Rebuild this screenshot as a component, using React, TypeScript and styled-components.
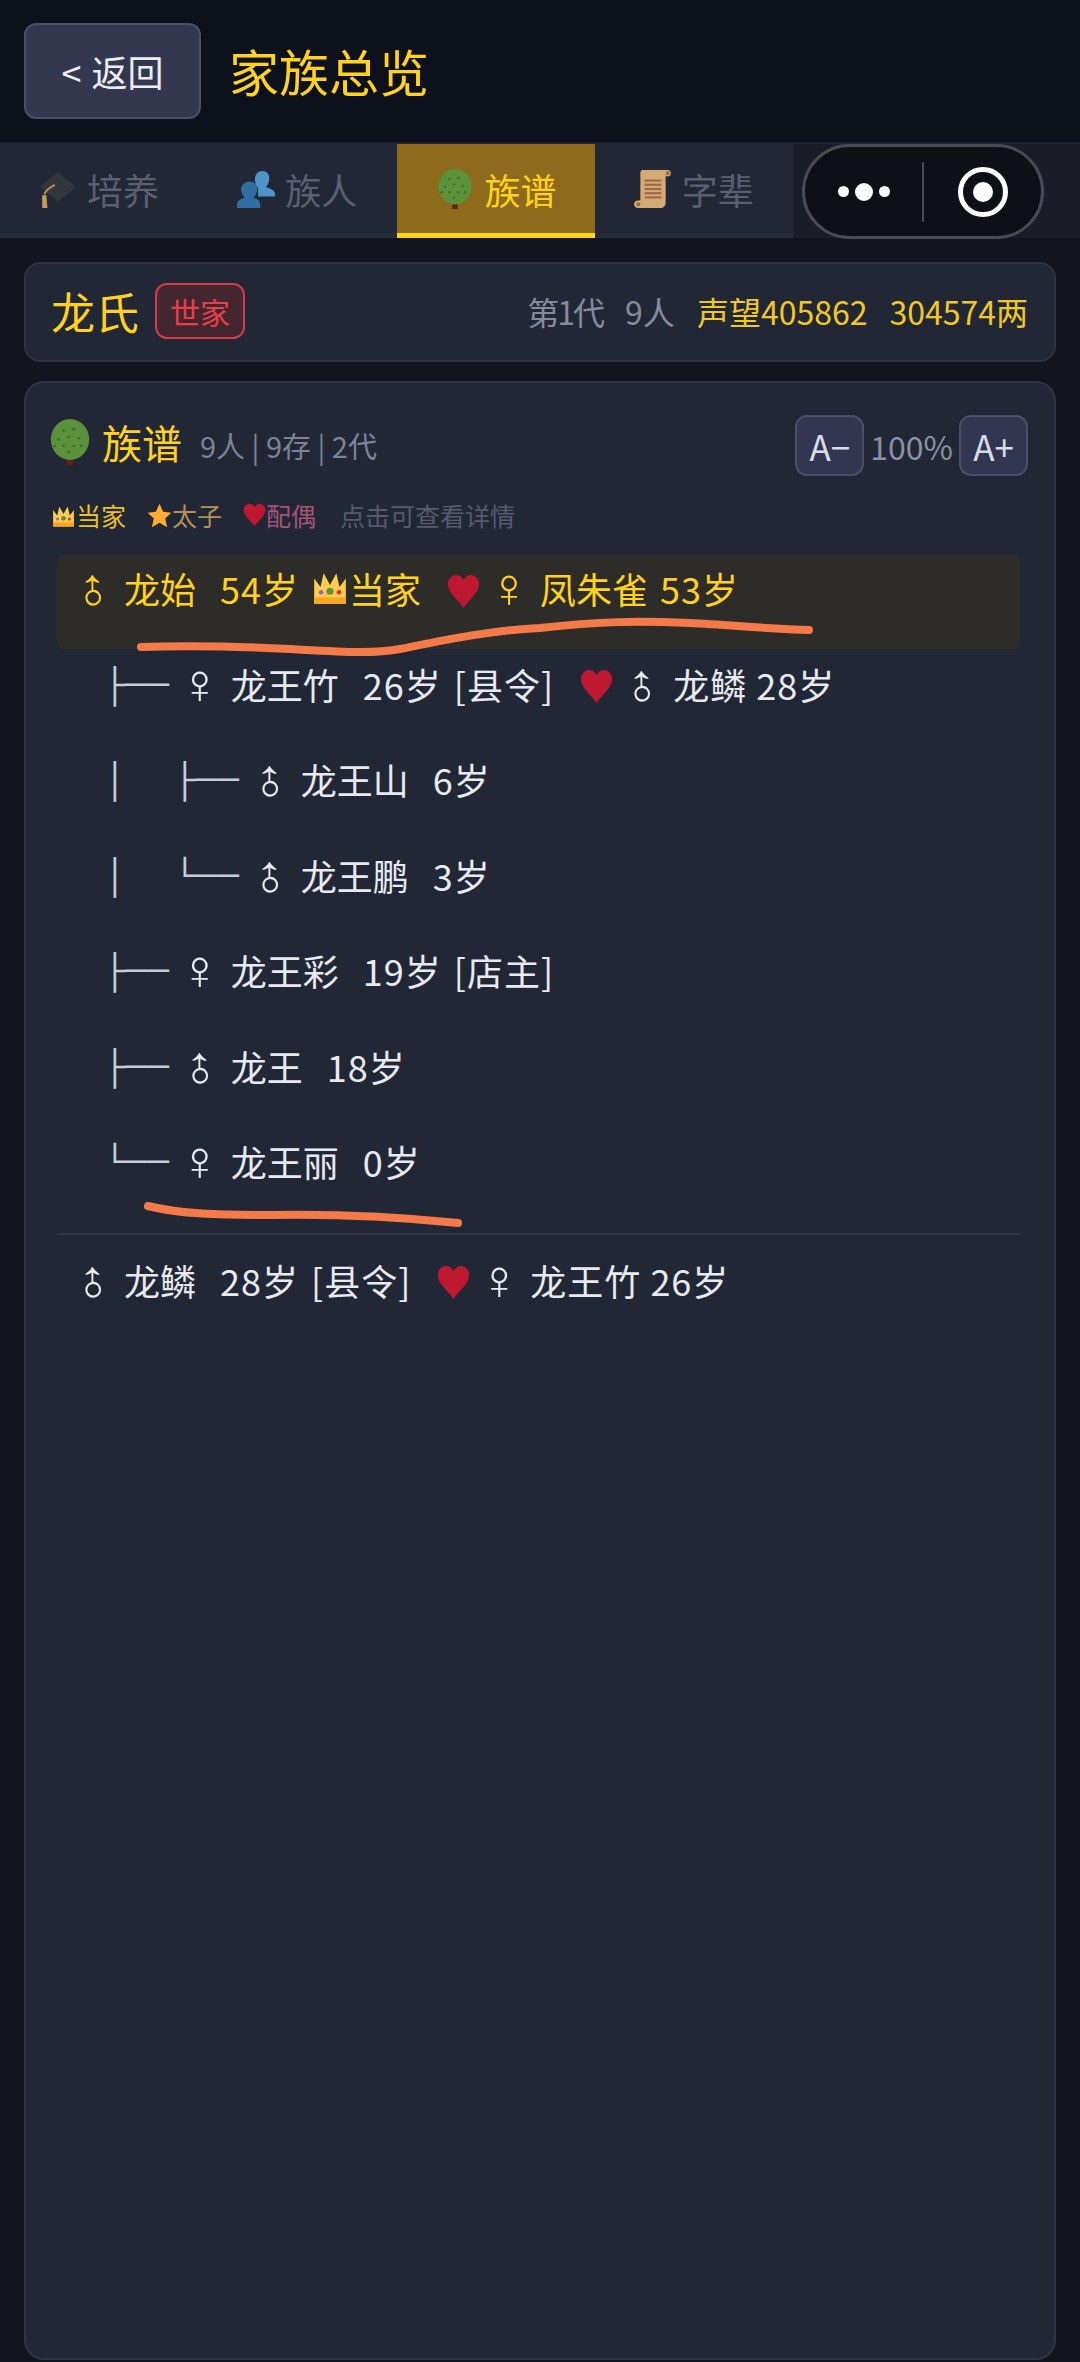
import React from "react";
import styled, { createGlobalStyle } from "styled-components";

const Global = createGlobalStyle`
  html, body { margin: 0; padding: 0; background: #11141c; }
  body { font-family: "Noto Sans CJK SC", "Noto Sans", sans-serif; }
  * { box-sizing: border-box; }
`;
const Page = styled.div`
  position: relative; width: 1080px; height: 2362px; overflow: hidden;
  display: flex; flex-direction: column; background: #11141c;
`;
const Header = styled.header`
  height: 144px; flex: none; background: #0d111c; display: flex; align-items: center;
  padding: 0 24px; gap: 28px; border-bottom: 2px solid #1d2130;
`;
const BackButton = styled.div`
  width: 177px; height: 96px; border-radius: 12px; background: #333850; border: 2px solid #4a5069;
  display: flex; align-items: center; justify-content: center; gap: 10px; color: #eceef4; font-size: 36px;
`;
const Title = styled.h1`
  margin: 0 0 2px; font-size: 50px; font-weight: 400; color: #ffd21e; line-height: 1;
`;
const TabBar = styled.nav`
  height: 94px; flex: none; display: flex; background: #1a1d28;
`;
const Tab = styled.div<{ $active?: boolean }>`
  width: 198.25px; display: flex; align-items: center; justify-content: center; gap: 10px;
  font-size: 36px;
  color: ${(p) => (p.$active ? "#ffd21e" : "#5a5f72")};
  background: ${(p) => (p.$active ? "#8d6a1c" : "#222735")};
  border-bottom: 5px solid ${(p) => (p.$active ? "#ffd21e" : "#262b3a")};
`;
const Capsule = styled.div`
  position: absolute; left: 802px; top: 144px; width: 242px; height: 95px; border-radius: 48px;
  background: #0e1015; border: 3px solid #4a4b52; display: flex; align-items: center;
`;
const CapsuleSide = styled.div`
  flex: 1; display: flex; align-items: center; justify-content: center; gap: 6px;
`;
const Dot = styled.span<{ $big?: boolean }>`
  display: block; border-radius: 50%; background: #fff;
  width: ${(p) => (p.$big ? 18 : 11)}px; height: ${(p) => (p.$big ? 18 : 11)}px;
`;
const CapsuleDivider = styled.span`
  width: 2px; height: 60px; background: #4a4b52;
`;
const Target = styled.span`
  width: 50px; height: 50px; border-radius: 50%; border: 5px solid #fff; display: flex;
  align-items: center; justify-content: center;
  &::after { content: ""; width: 20px; height: 20px; border-radius: 50%; background: #fff; }
`;
const Content = styled.main`
  flex: 1; display: flex; flex-direction: column; gap: 19px; padding: 24px 24px 2px;
`;
const ClanCard = styled.section`
  height: 100px; flex: none; background: #222735; border: 2px solid #2e3346; border-radius: 16px;
  display: flex; align-items: center; padding: 0 26px 3px 25px;
`;
const ClanName = styled.div`
  font-size: 44px; font-weight: 400; color: #ffd21e; line-height: 1;
`;
const RankBadge = styled.div`
  margin-left: 16px; width: 90px; height: 56px; border-radius: 12px; border: 2px solid #d23c48;
  background: #43262f; color: #e8404a; font-size: 30px; display: flex; align-items: center; justify-content: center;
`;
const ClanStats = styled.div`
  margin-left: auto; display: flex; align-items: center; gap: 22px; font-size: 32px;
`;
const Stat = styled.span<{ $gold?: boolean; $tight?: boolean }>`
  color: ${(p) => (p.$gold ? "#f2c823" : "#858b9f")};
  letter-spacing: ${(p) => (p.$tight ? "-2px" : "0")};
`;
const TreeCard = styled.section`
  flex: 1; background: #222735; border: 2px solid #2e3346; border-radius: 20px; padding: 0 26px 0 31px;
  display: flex; flex-direction: column;
`;
const TreeHeader = styled.div`
  display: flex; align-items: center; height: 123px; flex: none; margin-left: -5px;
`;
const TreeTitle = styled.div`
  display: flex; align-items: center; gap: 9px; font-size: 40px; font-weight: 400; color: #ffd21e;
  margin: -5px 0 0 -5px;
`;
const TreeCount = styled.div`
  margin-left: 18px; font-size: 29px; color: #7d8398;
`;
const Zoomer = styled.div`
  margin-left: auto; display: flex; align-items: center; gap: 6px; font-size: 32px; color: #8b90a6;
  margin-top: 2px;
`;
const ZoomButton = styled.div`
  width: 69px; height: 61px; border-radius: 12px; border: 2px solid #4a5069; background: #323650;
  color: #d8dbe8; display: flex; align-items: center; justify-content: center; font-size: 35px;
`;
const Legend = styled.div`
  display: flex; align-items: center; height: 40px; margin: -11px 0 20px -6px; font-size: 25px; flex: none;
`;
const LegendItem = styled.span<{ $color: string; $gap?: number }>`
  display: inline-flex; align-items: center; color: ${(p) => p.$color}; margin-right: ${(p) => p.$gap ?? 21}px;
`;
const Rows = styled.div`
  display: flex; flex-direction: column; margin-right: 8px;
`;
const Row = styled.div<{ $hl?: boolean }>`
  height: 93.5px; margin-bottom: 2px; flex: none; padding: 13px 0 0 24px; border-radius: 6px;
  display: flex; align-items: flex-start; font-size: 36px; line-height: 40px; white-space: pre;
  background: ${(p) => (p.$hl ? "#2e2c28" : "transparent")};
  color: ${(p) => (p.$hl ? "#ffd21e" : "#e8eaf2")};
`;
const Prefix = styled.span`
  flex: none; font-family: "Liberation Mono", monospace; font-size: 36px; line-height: 40px;
  color: #c9cdd8; margin: 3px 19px 0 23px;
`;
const Pipe = styled.span`
  display: inline-block; width: 70px;
`;
const Sex = styled.span`
  flex: none; width: 43px; display: flex; align-items: center; height: 40px; margin-left: -9px; margin-right: 9px;
`;
const SexGlyph = styled.span<{ $male?: boolean }>`
  display: inline-block; font-family: "Liberation Sans", sans-serif; font-size: 56px; line-height: 1;
  transform: ${(p) => (p.$male ? "translateY(4px) rotate(-45deg)" : "none")};
`;
const Name = styled.span<{ $gap?: number }>`
  margin-right: ${(p) => p.$gap ?? 24}px;
`;
const Age = styled.span`
  margin-right: 12px; letter-spacing: 1px;
`;
const Spaced = styled.span`
  letter-spacing: 1px;
`;
const Spouse = styled.span`
  flex: none; width: 76px; height: 40px; margin-top: 3px; padding-left: 26px; display: flex; align-items: center;
`;
const Rule = styled.div`
  height: 2px; flex: none; background: #2f3447; margin: 9px 0 12px;
`;
const Ink = styled.svg`
  position: absolute; left: 0; top: 0; pointer-events: none;
`;
const Icon = styled.svg`
  flex: none; display: block;
`;

const Crown = ({ s = 38 }: { s?: number }) => (
  <Icon width={s} height={s} viewBox="0 0 36 36">
    <path d="M3 34V10l6 8 3-13 6 11 6-11 3 13 6-8v24z" fill="#ffcc4d" />
    <rect x="3" y="28" width="30" height="6" fill="#f5a623" />
    <circle cx="18" cy="22" r="3.400" fill="#5c913b" />
    <circle cx="9.500" cy="23" r="2.200" fill="#9266cc" />
    <circle cx="26.500" cy="23" r="2.200" fill="#dd2e44" />
  </Icon>
);
const Heart = ({ s = 35, w = 33 }: { s?: number; w?: number }) => (
  <Icon width={w} height={s} viewBox="0 0 36 36" preserveAspectRatio="none">
    <path d="M18 35C14 28 1 20 1 10.500C1 4.500 5.500 1 10 1c3.800 0 6.700 2.200 8 5.500C19.300 3.200 22.200 1 26 1c4.500 0 9 3.500 9 9.500C35 20 22 28 18 35z" fill="#be1931" />
  </Icon>
);
const Star = () => (
  <Icon width={25} height={25} viewBox="0 0 36 36">
    <path d="M18 1l5.200 11.600L35 14l-8.800 8.200L29 35 18 28.500 7 35l2.800-12.800L1 14l11.800-1.400z" fill="#ffac33" />
  </Icon>
);
const TreeIcon = ({ s = 46 }: { s?: number }) => (
  <Icon width={s} height={s} viewBox="0 0 36 36">
    <rect x="15.500" y="27" width="5" height="9" fill="#662113" />
    <ellipse cx="18" cy="16" rx="15" ry="16" fill="#5c913b" />
    {[[13, 9], [21, 8], [17, 14], [9, 16], [25, 15], [13, 21], [21, 21], [17, 26], [27, 21], [6, 21]].map(([x, y]) => (
      <circle key={`${x}-${y}`} cx={x} cy={y} r="1.100" fill="#3e721d" />
    ))}
  </Icon>
);
const CapIcon = () => (
  <Icon width={38} height={38} viewBox="0 0 36 36">
    <path d="M18 2 35 16 18 30 1 16z" fill="#31373d" />
    <path d="M5 23c2-5 6-7 10-9" fill="none" stroke="#b8925a" strokeWidth="1.800" />
    <path d="M3 24h4l1 12H3z" fill="#c99a5b" />
  </Icon>
);
const BustsIcon = () => (
  <Icon width={38} height={38} viewBox="0 0 36 36">
    <path d="M24 1c5 0 7 4 6.500 8-.4 3-1.500 5.500-3 7 2 1.500 8.500 2 8.500 6.500V25H20v-8c-2-2-3-5-3-8 0-4 2-8 7-8z" fill="#4f93c9" />
    <path d="M12 11c5 0 8 4 7 9-.4 2.500-1.500 4.500-3 6 2 1.500 6 2 6 6.500V36H0v-3.500C0 28 5 27.500 7 26c-1.500-1.500-2.500-3.500-3-6-1-5 3-9 8-9z" fill="#2f6da3" />
  </Icon>
);
const ScrollIcon = () => (
  <Icon width={38} height={40} viewBox="0 0 36 38">
    <path d="M8 1h24c2 0 3 1.500 3 3s-1 3-3 3h-2v25c0 3-2 5-5 5H4c-2.500 0-4-1.500-4-3.500S1.500 30 4 30h2V4c0-2 1-3 2-3z" fill="#d3ab72" />
    <circle cx="32" cy="4" r="2" fill="#99713c" />
    <circle cx="4" cy="33.500" r="2" fill="#99713c" />
    {[10, 14, 18, 22, 26].map((y) => (
      <rect key={y} x="10" y={y} width="16" height="2" fill="#a0674b" />
    ))}
  </Icon>
);

const Male = () => (
  <Sex>
    <SexGlyph $male>♂</SexGlyph>
  </Sex>
);
const Female = () => (
  <Sex>
    <SexGlyph>♀</SexGlyph>
  </Sex>
);

type Member = { prefix: string; nested?: boolean; male: boolean; name: string; age: string; role?: string; spouse?: string };
const members: Member[] = [
  { prefix: "├──", male: false, name: "龙王竹", age: "26岁", role: "[县令]", spouse: "龙鳞 28岁" },
  { prefix: "├──", nested: true, male: true, name: "龙王山", age: "6岁" },
  { prefix: "└──", nested: true, male: true, name: "龙王鹏", age: "3岁" },
  { prefix: "├──", male: false, name: "龙王彩", age: "19岁", role: "[店主]" },
  { prefix: "├──", male: true, name: "龙王", age: "18岁" },
  { prefix: "└──", male: false, name: "龙王丽", age: "0岁" },
];

export default function App() {
  return (
    <Page>
      <Global />
      <Header>
        <BackButton>
          <span>&lt;</span>
          <span>返回</span>
        </BackButton>
        <Title>家族总览</Title>
      </Header>
      <TabBar>
        <Tab><CapIcon />培养</Tab>
        <Tab><BustsIcon />族人</Tab>
        <Tab $active><TreeIcon s={40} />族谱</Tab>
        <Tab><ScrollIcon />字辈</Tab>
      </TabBar>
      <Capsule>
        <CapsuleSide><Dot /><Dot $big /><Dot /></CapsuleSide>
        <CapsuleDivider />
        <CapsuleSide><Target /></CapsuleSide>
      </Capsule>
      <Content>
        <ClanCard>
          <ClanName>龙氏</ClanName>
          <RankBadge>世家</RankBadge>
          <ClanStats>
            <Stat $tight>第1代</Stat>
            <Stat>9人</Stat>
            <Stat $gold>声望405862</Stat>
            <Stat $gold>304574两</Stat>
          </ClanStats>
        </ClanCard>
        <TreeCard>
          <TreeHeader>
            <TreeTitle><TreeIcon />族谱</TreeTitle>
            <TreeCount>9人 | 9存 | 2代</TreeCount>
            <Zoomer>
              <ZoomButton>A−</ZoomButton>
              100%
              <ZoomButton>A+</ZoomButton>
            </Zoomer>
          </TreeHeader>
          <Legend>
            <LegendItem $color="#e9bf2c"><Crown s={25} />当家</LegendItem>
            <LegendItem $color="#b3925a"><Star />太子</LegendItem>
            <LegendItem $color="#a65478" $gap={24}><Heart s={24} w={23} />配偶</LegendItem>
            <LegendItem $color="#565b6e">点击可查看详情</LegendItem>
          </Legend>
          <Rows>
            <Row $hl>
              <Male />
              <Name>龙始</Name>
              <Age>54岁</Age>
              <Crown />
              <span>当家</span>
              <Spouse><Heart /></Spouse>
              <Female />
              <Name $gap={12}>凤朱雀</Name>
              <Spaced>53岁</Spaced>
            </Row>
            {members.map((m) => (
              <Row key={m.name}>
                <Prefix>
                  {m.nested && <Pipe>│</Pipe>}
                  {m.prefix}
                </Prefix>
                {m.male ? <Male /> : <Female />}
                <Name>{m.name}</Name>
                <Age>{m.age}</Age>
                {m.role && <Spaced>{m.role}</Spaced>}
                {m.spouse && (
                  <>
                    <Spouse><Heart /></Spouse>
                    <Male />
                    <Spaced>{m.spouse}</Spaced>
                  </>
                )}
              </Row>
            ))}
            <Rule />
            <Row>
              <Male />
              <Name>龙鳞</Name>
              <Age>28岁</Age>
              <Spaced>[县令]</Spaced>
              <Spouse><Heart /></Spouse>
              <Female />
              <Spaced>龙王竹 26岁</Spaced>
            </Row>
          </Rows>
        </TreeCard>
      </Content>
      <Ink width="1080" height="2362" viewBox="0 0 1080 2362">
        <path d="M141 647C190 645 230 646 290 649C340 652 375 654 400 649C440 641 490 630 540 628C600 621 640 621 690 623C730 625 770 629 809 630" fill="none" stroke="#f47a4a" strokeWidth="8" strokeLinecap="round" />
        <path d="M148 1206C180 1214 220 1215 270 1215C330 1214 390 1216 458 1223" fill="none" stroke="#f47a4a" strokeWidth="8" strokeLinecap="round" />
      </Ink>
    </Page>
  );
}
